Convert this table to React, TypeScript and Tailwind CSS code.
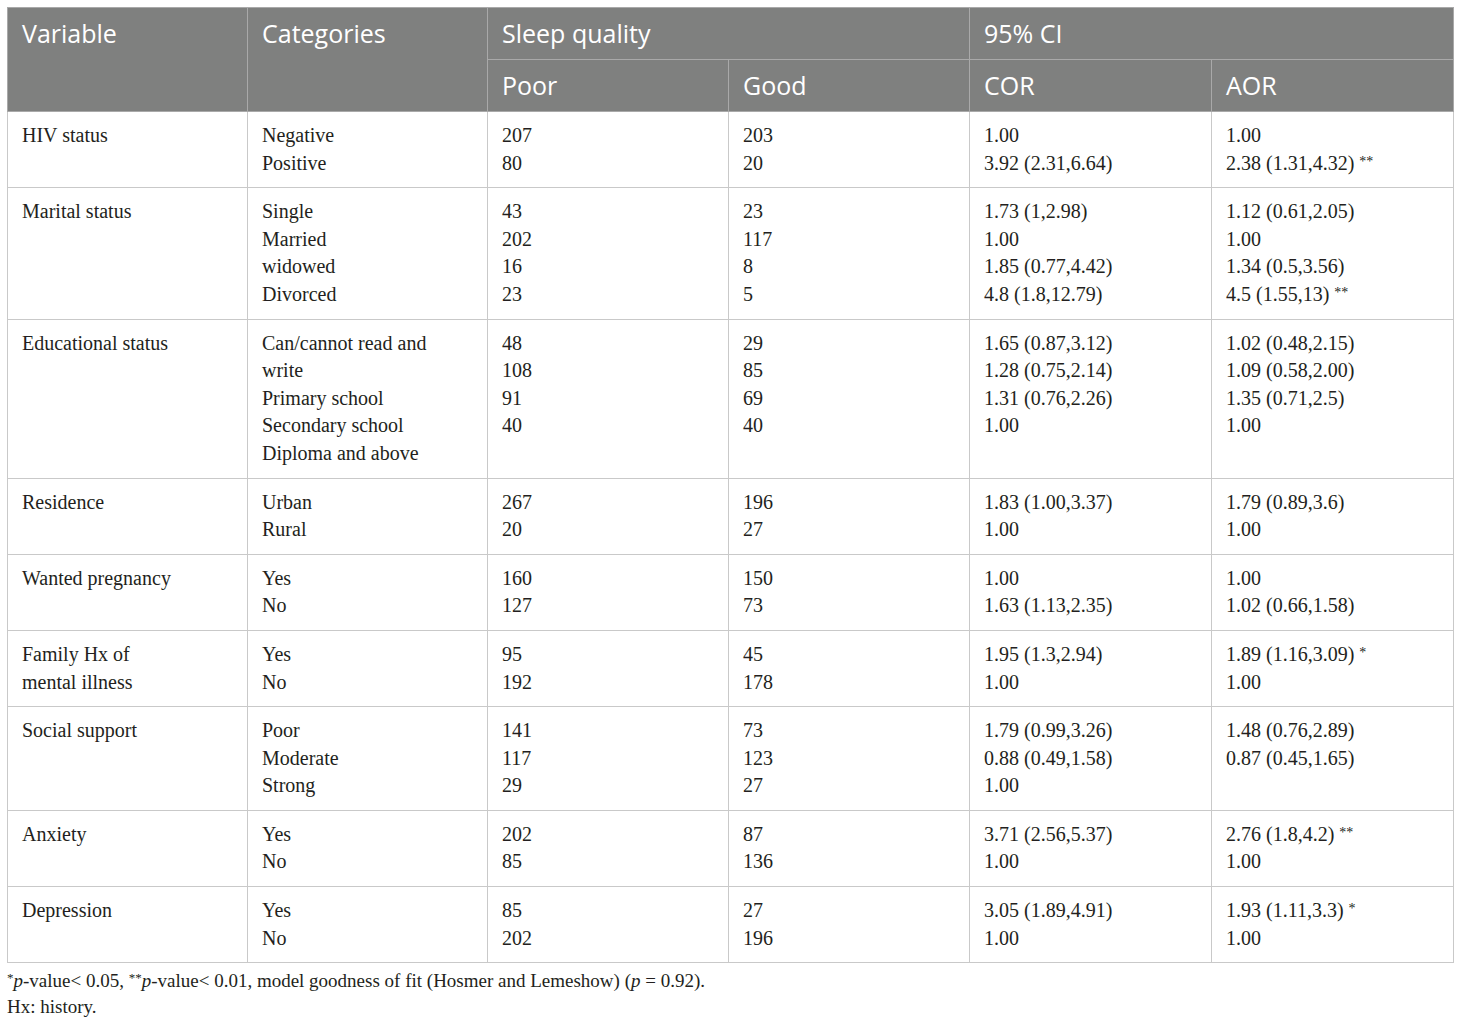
type Row = {
  variable: string[];
  categories: string[];
  poor: string[];
  good: string[];
  cor: string[];
  aor: string[];
};

const rows: Row[] = [
  {
    variable: ["HIV status"],
    categories: ["Negative", "Positive"],
    poor: ["207", "80"],
    good: ["203", "20"],
    cor: ["1.00", "3.92 (2.31,6.64)"],
    aor: ["1.00", "2.38 (1.31,4.32) **"],
  },
  {
    variable: ["Marital status"],
    categories: ["Single", "Married", "widowed", "Divorced"],
    poor: ["43", "202", "16", "23"],
    good: ["23", "117", "8", "5"],
    cor: ["1.73 (1,2.98)", "1.00", "1.85 (0.77,4.42)", "4.8 (1.8,12.79)"],
    aor: ["1.12 (0.61,2.05)", "1.00", "1.34 (0.5,3.56)", "4.5 (1.55,13) **"],
  },
  {
    variable: ["Educational status"],
    categories: ["Can/cannot read and", "write", "Primary school", "Secondary school", "Diploma and above"],
    poor: ["48", "108", "91", "40"],
    good: ["29", "85", "69", "40"],
    cor: ["1.65 (0.87,3.12)", "1.28 (0.75,2.14)", "1.31 (0.76,2.26)", "1.00"],
    aor: ["1.02 (0.48,2.15)", "1.09 (0.58,2.00)", "1.35 (0.71,2.5)", "1.00"],
  },
  {
    variable: ["Residence"],
    categories: ["Urban", "Rural"],
    poor: ["267", "20"],
    good: ["196", "27"],
    cor: ["1.83 (1.00,3.37)", "1.00"],
    aor: ["1.79 (0.89,3.6)", "1.00"],
  },
  {
    variable: ["Wanted pregnancy"],
    categories: ["Yes", "No"],
    poor: ["160", "127"],
    good: ["150", "73"],
    cor: ["1.00", "1.63 (1.13,2.35)"],
    aor: ["1.00", "1.02 (0.66,1.58)"],
  },
  {
    variable: ["Family Hx of", "mental illness"],
    categories: ["Yes", "No"],
    poor: ["95", "192"],
    good: ["45", "178"],
    cor: ["1.95 (1.3,2.94)", "1.00"],
    aor: ["1.89 (1.16,3.09) *", "1.00"],
  },
  {
    variable: ["Social support"],
    categories: ["Poor", "Moderate", "Strong"],
    poor: ["141", "117", "29"],
    good: ["73", "123", "27"],
    cor: ["1.79 (0.99,3.26)", "0.88 (0.49,1.58)", "1.00"],
    aor: ["1.48 (0.76,2.89)", "0.87 (0.45,1.65)"],
  },
  {
    variable: ["Anxiety"],
    categories: ["Yes", "No"],
    poor: ["202", "85"],
    good: ["87", "136"],
    cor: ["3.71 (2.56,5.37)", "1.00"],
    aor: ["2.76 (1.8,4.2) **", "1.00"],
  },
  {
    variable: ["Depression"],
    categories: ["Yes", "No"],
    poor: ["85", "202"],
    good: ["27", "196"],
    cor: ["3.05 (1.89,4.91)", "1.00"],
    aor: ["1.93 (1.11,3.3) *", "1.00"],
  },
];

// stars drawn smaller and raised like the journal layout
function Line({ text }: { text: string }) {
  const m = text.match(/^(.*?)\s(\*+)$/);
  if (!m) return <div>{text}</div>;
  return (
    <div>
      {m[1]} <span className="relative -top-[4px] text-[14px] leading-none">{m[2]}</span>
    </div>
  );
}

function Cell({ lines }: { lines: string[] }) {
  return (
    <td className="border border-[#c9c9c9] px-[14px] pt-[10px] pb-[10px] align-top whitespace-nowrap">
      {lines.map((l, i) => (
        <Line key={i} text={l} />
      ))}
    </td>
  );
}

const th = "border border-[#a9a9a9] px-[14px] pt-[8px] text-left font-normal align-top";

export default function App() {
  return (
    <div className="bg-white min-h-[1023px] pt-[7px] pl-[7px]">
      <table className="table-fixed border-collapse w-[1446px] text-[#231f20] font-['Liberation_Serif',serif] text-[20px] leading-[27.6px]">
        <colgroup>
          <col className="w-[240px]" />
          <col className="w-[240px]" />
          <col className="w-[241px]" />
          <col className="w-[241px]" />
          <col className="w-[242px]" />
          <col className="w-[242px]" />
        </colgroup>
        <thead className="bg-[#7f807f] text-white font-['Open_Sans',sans-serif] text-[25px] leading-[34px]">
          <tr className="h-[52px]">
            <th rowSpan={2} className={th}>
              Variable
            </th>
            <th rowSpan={2} className={th}>
              Categories
            </th>
            <th colSpan={2} className={th}>
              Sleep quality
            </th>
            <th colSpan={2} className={th}>
              95% CI
            </th>
          </tr>
          <tr className="h-[52px]">
            <th className={th}>Poor</th>
            <th className={th}>Good</th>
            <th className={th}>COR</th>
            <th className={th}>AOR</th>
          </tr>
        </thead>
        <tbody>
          {rows.map((r, i) => (
            <tr key={i}>
              <Cell lines={r.variable} />
              <Cell lines={r.categories} />
              <Cell lines={r.poor} />
              <Cell lines={r.good} />
              <Cell lines={r.cor} />
              <Cell lines={r.aor} />
            </tr>
          ))}
        </tbody>
      </table>
      <div className="mt-[5px] text-[#231f20] font-['Liberation_Serif',serif] text-[19px] leading-[26px]">
        <p>
          <span className="relative -top-[5px] text-[13px] leading-none">*</span>
          <i>p</i>-value&lt; 0.05, <span className="relative -top-[5px] text-[13px] leading-none">**</span>
          <i>p</i>-value&lt; 0.01, model goodness of fit (Hosmer and Lemeshow) (<i>p</i> = 0.92).
        </p>
        <p>Hx: history.</p>
      </div>
    </div>
  );
}
